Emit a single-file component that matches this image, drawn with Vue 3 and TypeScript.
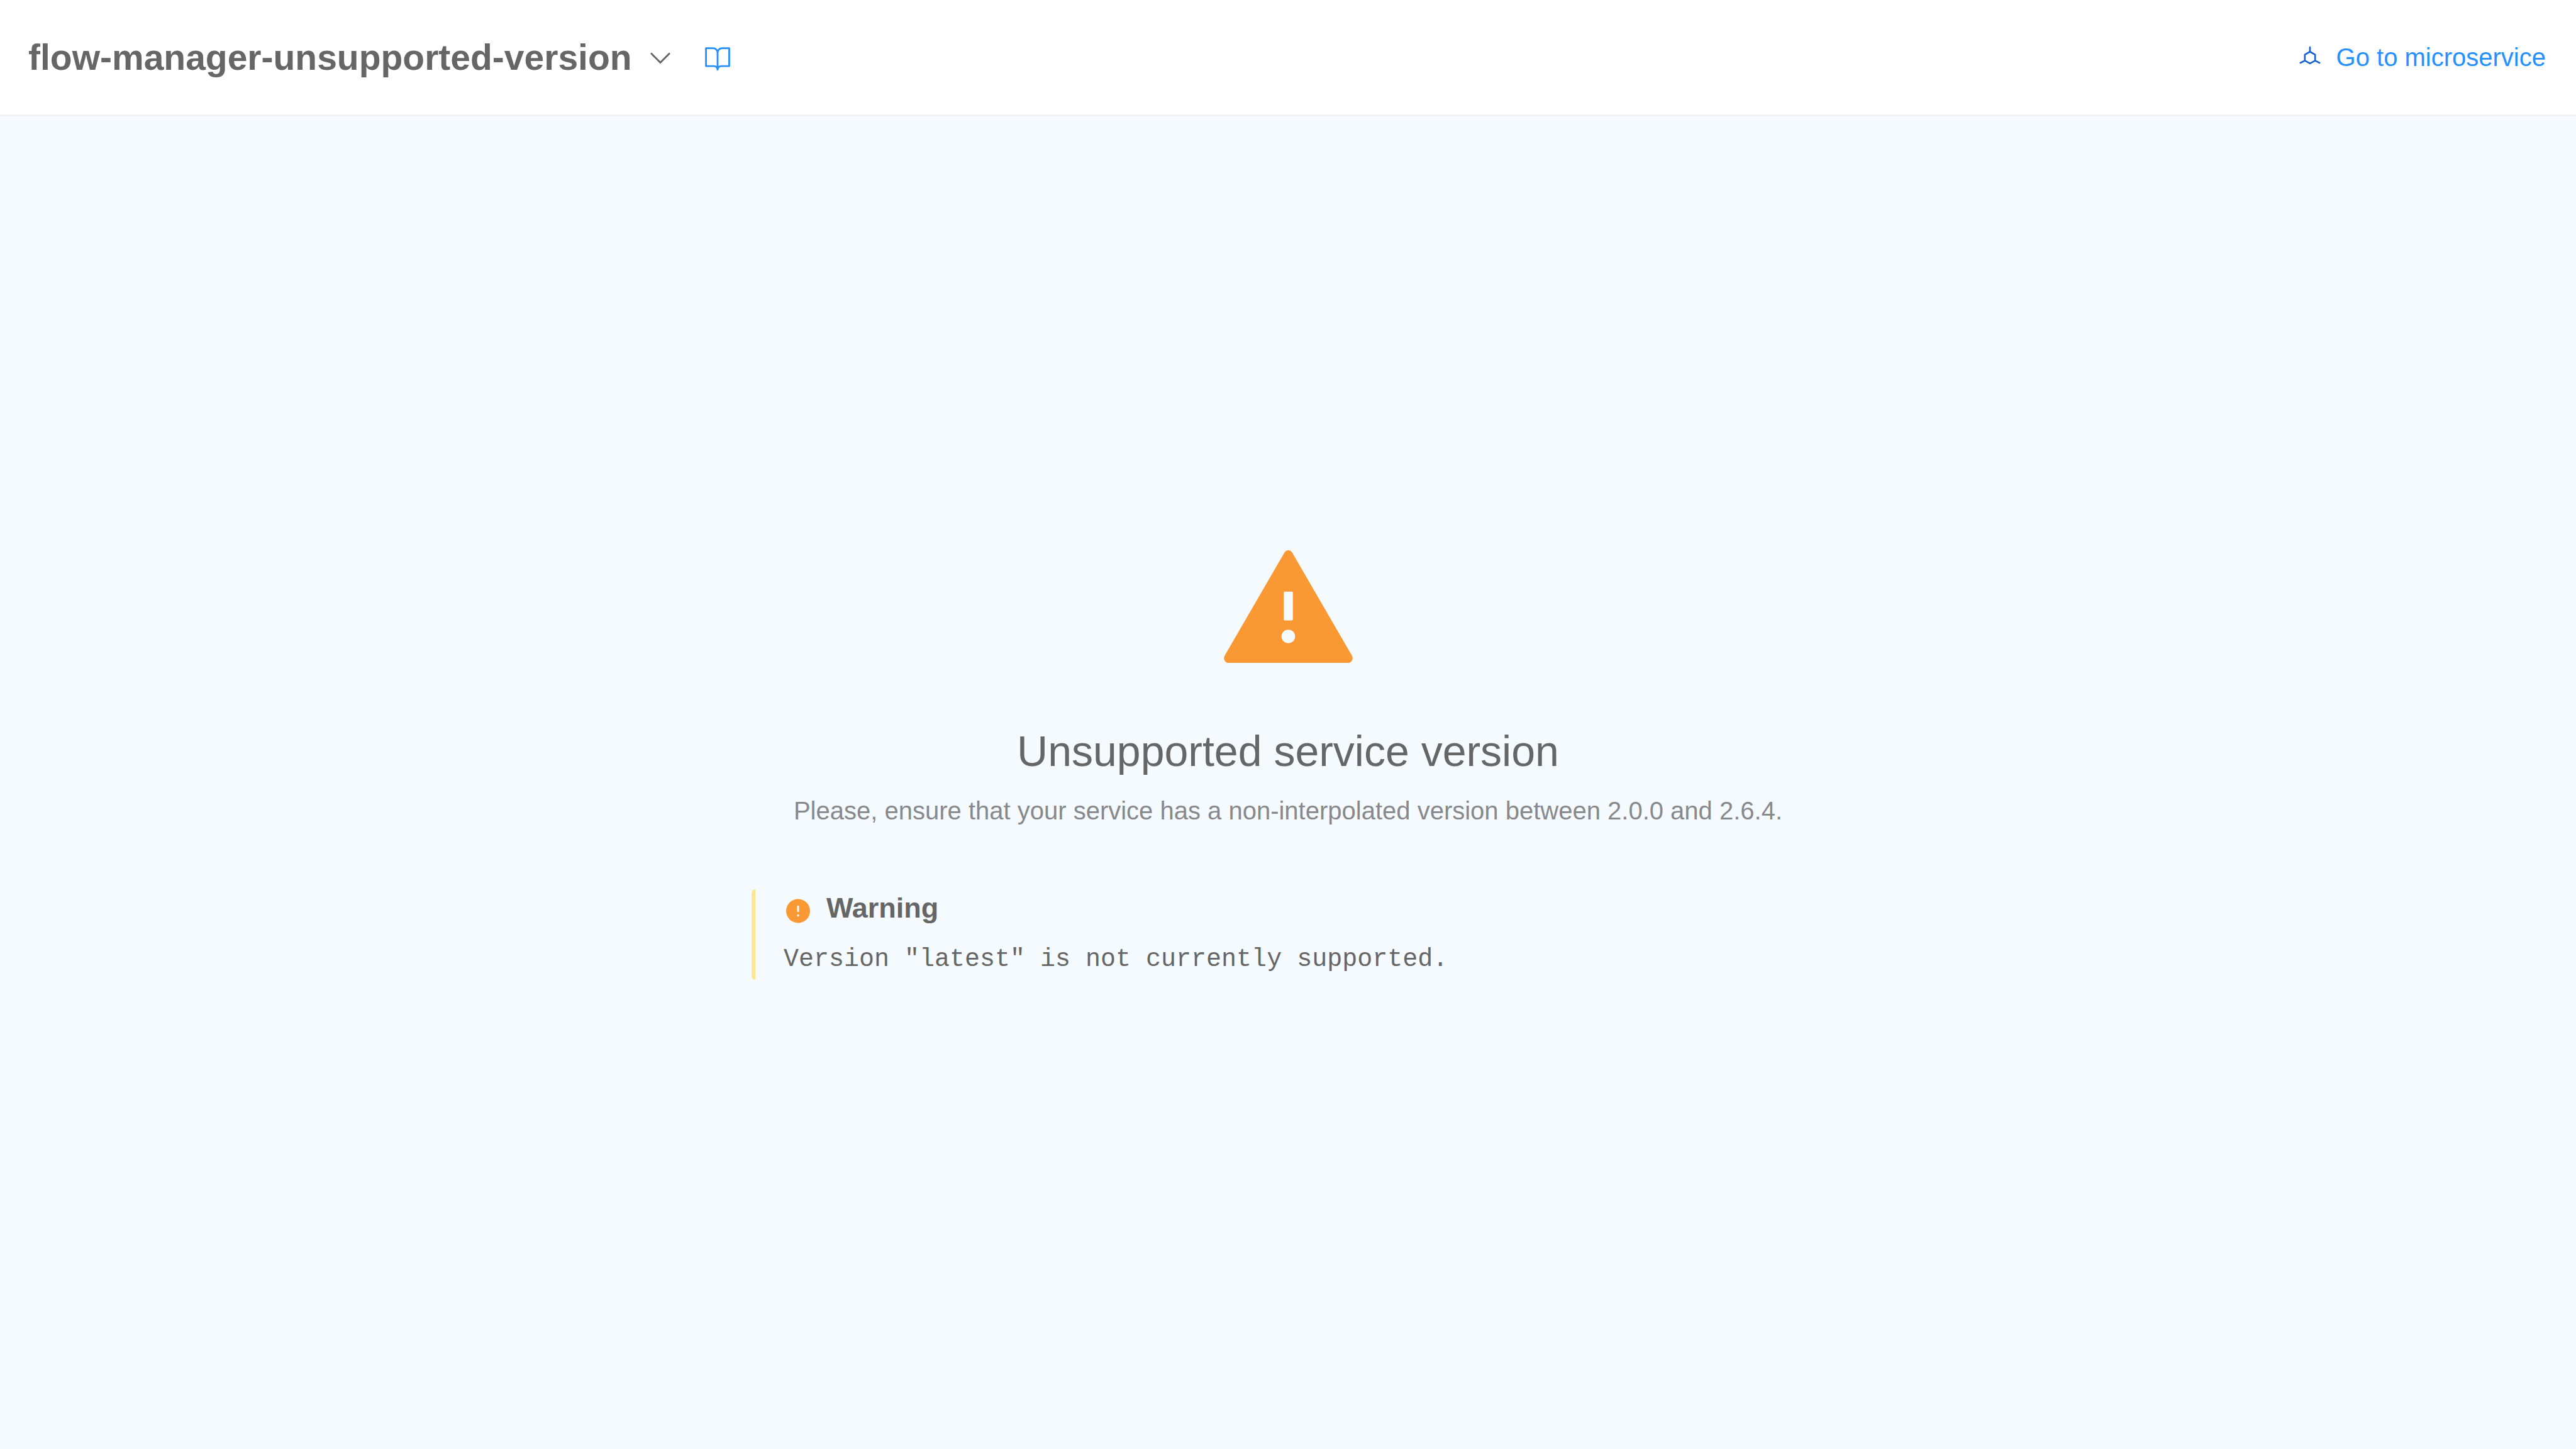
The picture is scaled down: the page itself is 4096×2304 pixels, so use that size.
<script setup lang="ts">
const serviceName: string = 'flow-manager-unsupported-version'
const currentVersion: string = 'latest'
const minVersion: string = '2.0.0'
const maxVersion: string = '2.6.4'
</script>

<template>
  <div class="page">
    <header class="header">
      <div class="service">
        <h1 class="service-name">{{ serviceName }}</h1>
        <button class="icon-button" type="button" aria-label="Select service">
          <svg class="icon chevron" viewBox="0 0 81 81" aria-hidden="true">
            <path d="M15.5 30.5L40.5 55.5L65.5 30.5" />
          </svg>
        </button>
      </div>
      <button class="icon-button" type="button" aria-label="Documentation">
        <svg class="icon book" viewBox="0 0 81 81" aria-hidden="true">
          <path
            d="M8 15.2H28A12.5 12.5 0 0 1 40.5 27.7A12.5 12.5 0 0 1 53 15.2H73V65.5H50.5A10 10 0 0 0 40.5 75.5A10 10 0 0 0 30.5 65.5H8ZM40.5 27.7V75.5"
          />
        </svg>
      </button>
      <a class="microservice-link" href="#microservice">
        <svg class="microservice-icon" viewBox="0 0 70 70" aria-hidden="true">
          <path
            d="M35 7.3V19.7L49.3 27.7V44.3L35 52.3L20.7 44.3V27.7L35 19.7M49.3 44.3L61.7 50.7M20.7 44.3L8.3 50.7"
          />
        </svg>
        <span>Go to microservice</span>
      </a>
    </header>

    <main class="content">
      <svg class="warning-triangle" viewBox="0 0 360 315" aria-hidden="true">
        <path
          fill-rule="evenodd"
          d="M190.7 6L358.3 295.3C363 304 357 315 347.3 315H12.7C3 315 -3 304 1.7 295.3L169.3 6C174 -2 186 -2 190.7 6ZM169.8 115.7A2.5 2.5 0 0 0 167.3 118.2V193.5A2.5 2.5 0 0 0 169.8 196H190.2A2.5 2.5 0 0 0 192.7 193.5V118.2A2.5 2.5 0 0 0 190.2 115.7ZM180 222A19 19 0 0 0 180 260A19 19 0 0 0 180 222Z"
        />
      </svg>
      <h2 class="title">Unsupported service version</h2>
      <p class="subtitle">
        Please, ensure that your service has a non-interpolated version between {{ minVersion }} and {{ maxVersion }}.
      </p>
      <section class="alert" role="alert">
        <div class="alert-head">
          <svg class="alert-icon" viewBox="0 0 46 60" aria-hidden="true">
            <circle class="disc" cx="23" cy="34.5" r="19" />
            <path class="mark" d="M23 27.2V34.8" />
            <circle class="dot" cx="23" cy="41.7" r="1.8" />
          </svg>
          <h3 class="alert-title">Warning</h3>
        </div>
        <p class="alert-text">Version "{{ currentVersion }}" is not currently supported.</p>
      </section>
    </main>
  </div>
</template>

<style>
body {
  margin: 0;
  background: #f5faff;
}
</style>

<style scoped>
.page {
  display: flex;
  flex-direction: column;
  min-height: 100vh;
  color: #666;
  background: #f5faff;
  font-family: "Liberation Sans", Arial, sans-serif;
  font-size: 40px;
  line-height: 64px;
}

h1,
h2,
h3,
p {
  margin: 0;
}

svg {
  display: block;
  flex: none;
}

.header {
  display: flex;
  align-items: center;
  gap: 45px;
  padding: 46px 48px 46px 45px;
  background: #fff;
  border-bottom: 3px solid #f0f0f5;
}

.service {
  display: flex;
  align-items: center;
  gap: 22px;
}

.service-name {
  font-size: 57px;
  font-weight: 700;
  line-height: 90px;
}

.icon-button {
  padding: 0;
  border: 0;
  color: inherit;
  background: none;
  cursor: pointer;
}

.icon {
  width: 46px;
  height: 46px;
  fill: none;
  stroke-width: 5;
  stroke-linecap: round;
  stroke-linejoin: round;
}

.chevron {
  stroke: #666;
}

.book {
  stroke: #2491ff;
}

.microservice-link {
  display: flex;
  align-items: center;
  gap: 22px;
  margin-left: auto;
  color: #2491ff;
  text-decoration: none;
}

.microservice-icon {
  width: 40px;
  height: 40px;
  fill: none;
  stroke: #1561d1;
  stroke-width: 4.6;
  stroke-linecap: round;
  stroke-linejoin: round;
}

.content {
  display: flex;
  flex: 1;
  flex-direction: column;
  align-items: center;
  justify-content: center;
  padding-bottom: 56px;
}

.warning-triangle {
  width: 205px;
  height: 179px;
  fill: #fa9933;
}

.title {
  margin-top: 94px;
  font-size: 68px;
  font-weight: 400;
  line-height: 92px;
}

.subtitle {
  margin-top: 17px;
  color: #87898c;
}

.alert {
  box-sizing: border-box;
  width: 100%;
  max-width: 1706px;
  margin-top: 93px;
  padding-left: 45px;
  border-left: 6px solid #ffe58f;
  border-radius: 6px;
}

.alert-head {
  display: flex;
  gap: 22px;
}

.alert-icon {
  width: 46px;
  height: 60px;
}

.disc {
  fill: #fa9933;
}

.mark {
  stroke: #fff;
  stroke-width: 3;
  stroke-linecap: round;
}

.dot {
  fill: #fff;
}

.alert-title {
  font-size: 45px;
  font-weight: 700;
  line-height: 60px;
}

.alert-text {
  margin-top: 20px;
  font-family: "Liberation Mono", "Courier New", monospace;
}
</style>
